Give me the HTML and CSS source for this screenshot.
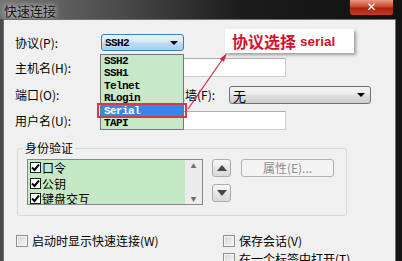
FILE: index.html
```html
<!DOCTYPE html>
<html lang="zh-CN">

<head>
    <meta charset="UTF-8">
    <meta name="viewport" content="width=device-width, initial-scale=1.0">
    <title>快速连接</title>
    <link rel="stylesheet" href="styles.css">
</head>

<body>
    <div class="frame">
        <div class="titlebar">
            <span class="title">快速连接</span>
            <span class="close">✕</span>
        </div>
        <div class="client">
            <div class="row row-proto">
                <label class="lbl">协议(P):</label>
                <div class="combo combo-active"><span>SSH2</span><i class="caret"></i></div>
            </div>
            <div class="row row-host">
                <label class="lbl">主机名(H):</label>
                <div class="input input-wide"></div>
            </div>
            <div class="row row-port">
                <label class="lbl">端口(O):</label>
                <div class="input input-port"></div>
                <label class="lbl-fw">防火墙(F):</label>
                <div class="combo combo-fw"><span>无</span><i class="caret"></i></div>
            </div>
            <div class="row row-user">
                <label class="lbl">用户名(U):</label>
                <div class="input input-wide"></div>
            </div>

            <fieldset class="group">
                <legend>身份验证</legend>
                <div class="group-body">
                    <div class="listbox">
                        <ul class="auth-list">
                            <li><span class="chk"><svg width="9" height="9" viewBox="0 0 9 9"><path d="M1 4.5 L3.5 7 L8 1.5" fill="none" stroke="#000" stroke-width="2"/></svg></span>口令</li>
                            <li><span class="chk"><svg width="9" height="9" viewBox="0 0 9 9"><path d="M1 4.5 L3.5 7 L8 1.5" fill="none" stroke="#000" stroke-width="2"/></svg></span>公钥</li>
                            <li><span class="chk"><svg width="9" height="9" viewBox="0 0 9 9"><path d="M1 4.5 L3.5 7 L8 1.5" fill="none" stroke="#000" stroke-width="2"/></svg></span>键盘交互</li>
                        </ul>
                        <div class="vscroll">
                            <span class="sc-arrow">▲</span>
                            <span class="sc-arrow">▼</span>
                        </div>
                    </div>
                    <div class="order-btns">
                        <span class="sq-btn"><i class="tri-up"></i></span>
                        <span class="sq-btn"><i class="tri-down"></i></span>
                    </div>
                    <span class="btn-prop">属性(E)...</span>
                </div>
            </fieldset>

            <div class="options">
                <div class="opt-col opt-left">
                    <label class="opt"><span class="box"></span>启动时显示快速连接(W)</label>
                </div>
                <div class="opt-col">
                    <label class="opt"><span class="box"></span>保存会话(V)</label>
                    <label class="opt"><span class="box"></span>在一个标签中打开(T)</label>
                </div>
            </div>
        </div>

        <!-- open protocol list -->
        <ul class="dropdown">
            <li>SSH2</li>
            <li>SSH1</li>
            <li>Telnet</li>
            <li>RLogin</li>
            <li class="selected">Serial</li>
            <li>TAPI</li>
        </ul>
        <div class="mark-box"></div>
        <div class="callout"><span class="cn">协议选择</span> <span class="en">serial</span></div>
        <svg class="pointer" width="402" height="261" viewBox="0 0 402 261">
            <line x1="188" y1="109" x2="222" y2="60" stroke="#d0243a" stroke-width="1.2"/>
            <polygon points="227,53 223.9,61.8 219.8,59" fill="#d0243a"/>
        </svg>
    </div>
</body>

</html>
```

FILE: styles.css
```css
* {
    box-sizing: border-box;
}

body {
    margin: 0;
    width: 402px;
    height: 261px;
    overflow: hidden;
    background: #222;
    font-family: "Noto Sans CJK SC", sans-serif;
    font-size: 12px;
    color: #000;
}

.frame {
    position: relative;
    width: 402px;
    height: 261px;
    display: flex;
    flex-direction: column;
    background: linear-gradient(to right, #4a4a4a, #1e1e1e 45%, #141414);
}

.titlebar {
    height: 22px;
    display: flex;
    justify-content: space-between;
    align-items: flex-start;
    background: linear-gradient(to right, #747474, #4a4a4a 30%, #1c1c1c 60%, #111);
}

.title {
    margin: 2px 0 0 4px;
    font-size: 13px;
    line-height: 17px;
    color: #151515;
    text-shadow: 0 0 4px #d8d8d8, 0 0 7px #c4c4c4;
}

.close {
    width: 45px;
    height: 16px;
    margin-right: 8px;
    border: 1px solid #3b0d07;
    border-top: none;
    border-radius: 0 0 4px 4px;
    background: linear-gradient(#e59a84, #cc5236 40%, #a92510 55%, #c43c22);
    color: #fff;
    text-align: center;
    font: bold 12px/15px "DejaVu Sans", sans-serif;
}

.client {
    flex: 1;
    margin: 0 6px 0 3px;
    border: 1px solid #707070;
    border-bottom: none;
    background: #f0f0f0;
}

/* form rows */
.row {
    display: flex;
    align-items: center;
    padding-left: 11px;
}

.row-proto {
    margin-top: 14px;
    height: 17px;
}

.row-host {
    margin-top: 7px;
    height: 19px;
}

.row-port {
    margin-top: 9px;
    height: 18px;
}

.row-user {
    margin-top: 7px;
    height: 19px;
}

.lbl {
    width: 86px;
    line-height: 14px;
}

.lbl-fw {
    width: 68px;
    margin-left: 12px;
    line-height: 14px;
}

.input {
    height: 19px;
    background: #fff;
    border: 1px solid #c9ccd2;
    border-top-color: #abadb3;
}

.input-wide {
    width: 185px;
}

.input-port {
    width: 48px;
}

.combo {
    height: 100%;
    display: flex;
    align-items: center;
    justify-content: space-between;
    padding: 0 5px 0 3px;
    border-radius: 3px;
}

.combo-active {
    width: 83px;
    border: 1px solid #3c7fb1;
    background: linear-gradient(#e8f3fc, #d6e9f9 45%, #bcdaf3 55%, #a9cfee);
    font: bold 11px "Liberation Mono", monospace;
    letter-spacing: -0.6px;
}

.combo-fw {
    width: 142px;
    border: 1px solid #707070;
    background: linear-gradient(#f4f4f4, #ebebeb 45%, #dddddd 55%, #cfcfcf);
    font-size: 13px;
}

.caret {
    width: 0;
    height: 0;
    border-left: 4px solid transparent;
    border-right: 4px solid transparent;
    border-top: 4px solid #000;
}

/* auth group */
.group {
    margin: 11px 0 0 13px;
    width: 330px;
    height: 75px;
    padding: 4px 0 0 9px;
    border: 1px solid #d3dbe0;
    border-radius: 3px;
    min-width: 0;
}

.group legend {
    margin-left: -4px;
    padding: 0 2px;
    font-size: 12px;
    line-height: 14px;
}

.group-body {
    display: flex;
    align-items: flex-start;
}

.listbox {
    width: 176px;
    height: 46px;
    display: flex;
    border: 1px solid #828790;
    background: #c4e9c4;
    overflow: hidden;
}

.auth-list {
    flex: 1;
    list-style: none;
    margin: 0;
    padding: 0 0 0 2px;
}

.auth-list li {
    height: 15.5px;
    display: flex;
    align-items: center;
    font-size: 12px;
}

.chk {
    width: 11px;
    height: 11px;
    margin-right: 1px;
    border: 1px solid #1c1c1c;
    background: #fff;
    display: flex;
    align-items: center;
    justify-content: center;
}

.vscroll {
    width: 17px;
    display: flex;
    flex-direction: column;
    justify-content: space-between;
    align-items: center;
    padding: 2px 0 1px;
    background: #ececec;
}

.sc-arrow {
    font-size: 6px;
    line-height: 8px;
    color: #6f6f6f;
}

.order-btns {
    margin-left: 9px;
    display: flex;
    flex-direction: column;
    gap: 7px;
}

.sq-btn {
    width: 19px;
    height: 18px;
    display: flex;
    align-items: center;
    justify-content: center;
    border: 1px solid #a9abad;
    border-radius: 3px;
    background: linear-gradient(#f7f7f7, #e6e6e6 50%, #d9d9d9);
}

.tri-up,
.tri-down {
    width: 0;
    height: 0;
    border-left: 5px solid transparent;
    border-right: 5px solid transparent;
}

.tri-up {
    border-bottom: 6px solid #474747;
}

.tri-down {
    border-top: 6px solid #474747;
}

.btn-prop {
    width: 93px;
    height: 18px;
    margin-left: 10px;
    border: 1px solid #adb2b5;
    border-radius: 3px;
    background: #f4f4f4;
    color: #8d8d8d;
    text-align: center;
    line-height: 16px;
}

/* bottom options */
.options {
    margin-top: 18px;
    padding-left: 12px;
    display: flex;
}

.opt-left {
    width: 207px;
}

.opt-col {
    display: flex;
    flex-direction: column;
    gap: 5px;
}

.opt {
    height: 13px;
    display: flex;
    align-items: center;
    gap: 4px;
    line-height: 13px;
}

.box {
    width: 12px;
    height: 12px;
    border: 1px solid #8e8f8f;
    background: linear-gradient(135deg, #d5d5d5, #f6f6f6);
    box-shadow: inset 0 0 0 1px #f4f4f4;
}

/* overlays */
.dropdown {
    position: absolute;
    left: 100px;
    top: 54px;
    width: 84px;
    margin: 0;
    padding: 0;
    list-style: none;
    border: 1px solid #767676;
    background: #c7e9c7;
    font: bold 11px "Liberation Mono", monospace;
    letter-spacing: -0.6px;
}

.dropdown li {
    height: 12.4px;
    line-height: 12.4px;
    padding-left: 3px;
}

.dropdown .selected {
    background: #3388e8;
    color: #fff;
}

.mark-box {
    position: absolute;
    left: 97px;
    top: 103px;
    width: 90px;
    height: 15px;
    border: 2px solid #d6374a;
}

.callout {
    position: absolute;
    left: 225px;
    top: 29px;
    width: 129px;
    height: 24px;
    padding-left: 7px;
    display: flex;
    align-items: center;
    gap: 4px;
    background: #fff;
    box-shadow: 2px 2px 3px rgba(0, 0, 0, 0.35);
    color: #d0122c;
    font-weight: bold;
}

.callout .cn {
    font-size: 16px;
}

.callout .en {
    font: bold 13.5px "Liberation Sans", sans-serif;
}

.pointer {
    position: absolute;
    left: 0;
    top: 0;
    pointer-events: none;
}
```
